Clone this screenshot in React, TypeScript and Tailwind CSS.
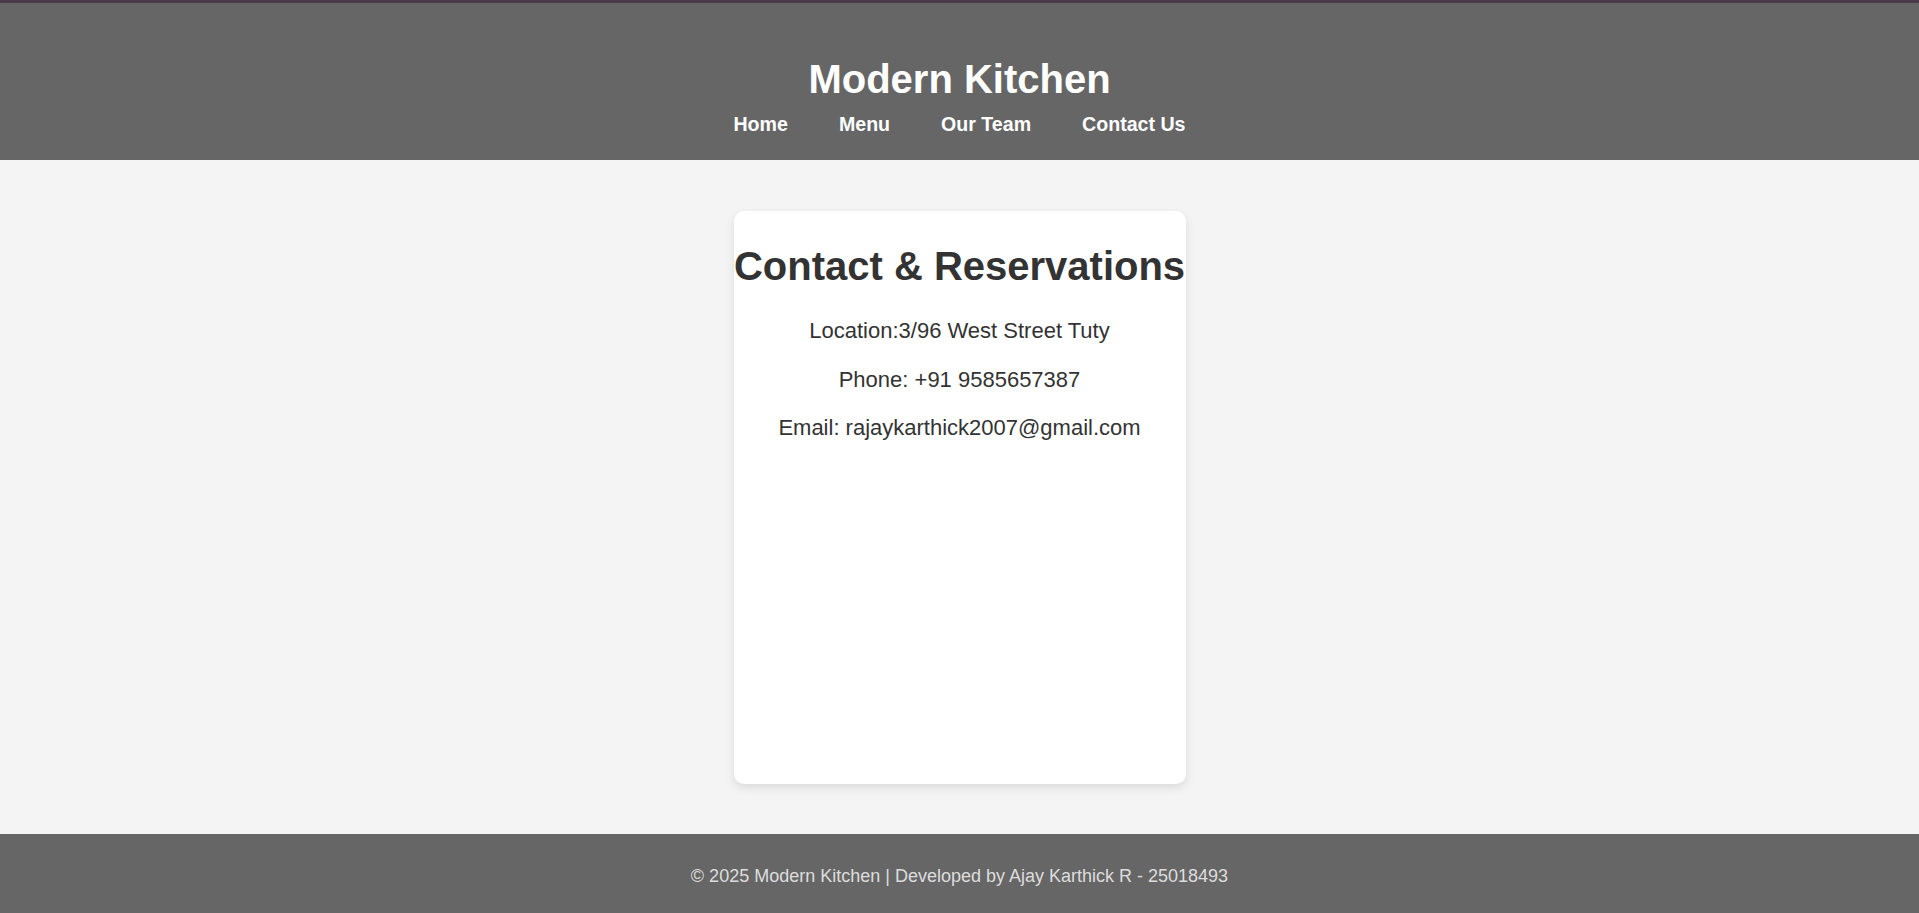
import React from "react";

const links = ["Home", "Menu", "Our Team", "Contact Us"];

const App = () => {
  return (
    <div className="min-h-screen flex flex-col bg-[#f4f4f4] font-['Liberation_Sans',Arial,sans-serif]">
      <header className="h-[160px] border-t-[3px] border-[#4a3b4b] bg-[#666666] text-white flex flex-col items-center pt-[53px]">
        <h1 className="text-[40px] leading-[46px] font-bold">Modern Kitchen</h1>
        <nav className="mt-[11px] flex gap-[51px]">
          {links.map((l) => (
            <a key={l} href="#" className="text-[19.6px] leading-[22px] font-bold text-white">
              {l}
            </a>
          ))}
        </nav>
      </header>

      <main className="flex justify-center pt-[51px] pb-[50px]">
        <section className="w-[452px] h-[573px] bg-white rounded-[10px] shadow-[0_4px_10px_rgba(0,0,0,0.1)] flex flex-col items-center text-[#333333] pt-[32px]">
          <h2 className="text-[40px] leading-[46px] font-bold whitespace-nowrap">Contact &amp; Reservations</h2>
          <div className="mt-[29px] flex flex-col items-center gap-[22.6px] text-[22px] leading-[26px]">
            <p>Location:3/96 West Street Tuty</p>
            <p>Phone: +91 9585657387</p>
            <p>Email: rajaykarthick2007@gmail.com</p>
          </div>
        </section>
      </main>

      <footer className="h-[79px] bg-[#666666] text-[#dddddd] flex justify-center pt-[31px]">
        <p className="text-[18px] leading-[22px]">© 2025 Modern Kitchen | Developed by Ajay Karthick R - 25018493</p>
      </footer>
    </div>
  );
};

export default App;
